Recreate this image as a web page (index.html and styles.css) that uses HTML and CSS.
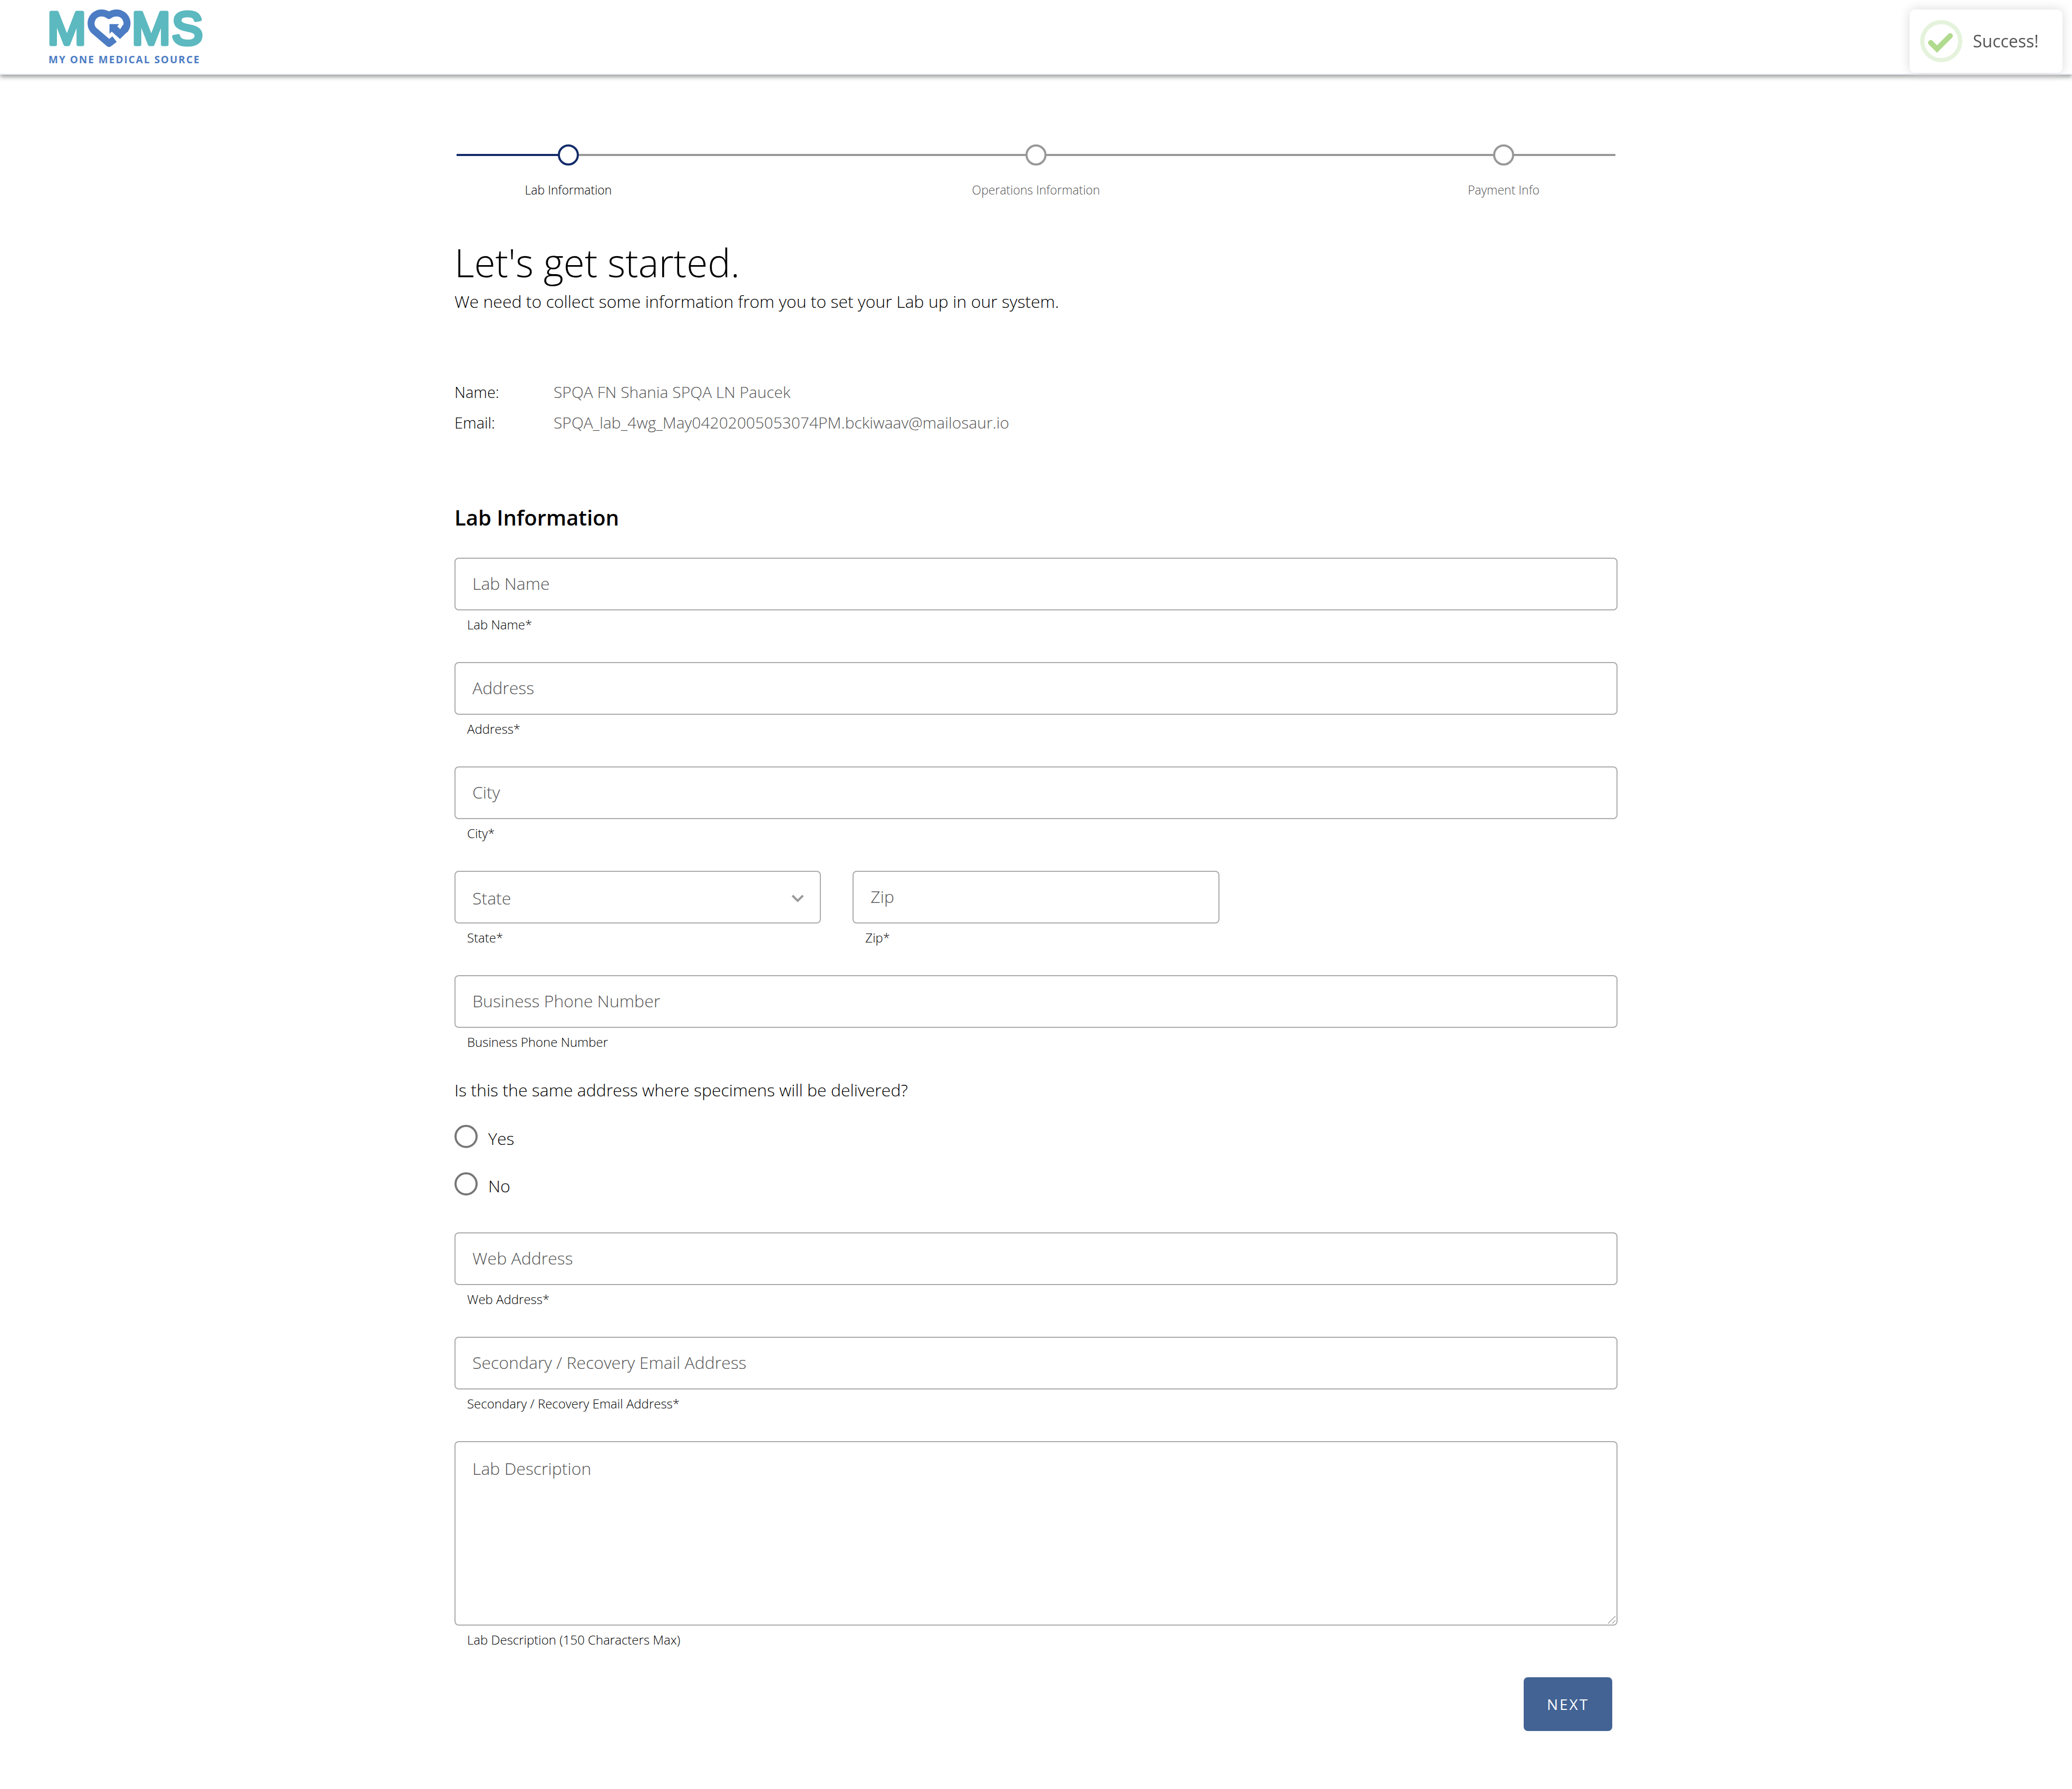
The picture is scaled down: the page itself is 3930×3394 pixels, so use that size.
FILE: index.html
```html
<!DOCTYPE html>
<html lang="en">
<head>
<meta charset="utf-8">
<title>MOMS - Lab Information</title>
<link rel="stylesheet" href="styles.css">
</head>
<body>
<header class="topbar">
  <svg class="logo" viewBox="90 0 300 140" role="img" aria-label="MOMS, My One Medical Source">
    <g class="logo-word">
      <text x="90" y="84">M</text>
      <text x="250" y="84">M</text>
      <text x="326" y="84">S</text>
    </g>
    <g transform="translate(60 0) scale(.3333)">
      <path class="logo-heart" d="M472 223 L441 247 L353 172 A59 59 0 0 1 397 74 Q421 74 440 88 Q460 74 484 74 A59 59 0 0 1 528 172"/>
      <path class="logo-arrow" d="M443 137 H498 L487 150 L504 166 L520 140 L546 180 L503 222 L456 180 L443 192 Z"/>
    </g>
    <text class="logo-tag" x="92" y="120">MY ONE MEDICAL SOURCE</text>
  </svg>
</header>

<div class="toast" role="status">
  <svg class="toast-icon" viewBox="0 0 80 80" aria-hidden="true">
    <circle class="toast-ring" cx="40" cy="40" r="36"/>
    <path class="toast-tick" d="M20 43 L32 55 L57 30"/>
  </svg>
  <span>Success!</span>
</div>

<main class="page">
  <ol class="stepper">
    <li class="step step-active"><span class="step-dot"></span>Lab Information</li>
    <li class="step"><span class="step-dot"></span>Operations Information</li>
    <li class="step"><span class="step-dot"></span>Payment Info</li>
  </ol>

  <h1 class="title">Let's get started.</h1>
  <p class="lead">We need to collect some information from you to set your Lab up in our system.</p>

  <dl class="account">
    <dt>Name:</dt><dd>SPQA FN Shania SPQA LN Paucek</dd>
    <dt>Email:</dt><dd>SPQA_lab_4wg_May04202005053074PM.bckiwaav@mailosaur.io</dd>
  </dl>

  <h2 class="section-title">Lab Information</h2>

  <form class="form">
    <div class="field">
      <input class="control" id="lab-name" type="text" placeholder="Lab Name">
      <label class="help" for="lab-name">Lab Name*</label>
    </div>
    <div class="field">
      <input class="control" id="address" type="text" placeholder="Address">
      <label class="help" for="address">Address*</label>
    </div>
    <div class="field">
      <input class="control" id="city" type="text" placeholder="City">
      <label class="help" for="city">City*</label>
    </div>
    <div class="field-row">
      <div class="field">
        <div class="select">
          <select class="control" id="state"><option>State</option></select>
          <svg class="chevron" viewBox="0 0 24 16" aria-hidden="true"><path d="M2 3 L12 13 L22 3"/></svg>
        </div>
        <label class="help" for="state">State*</label>
      </div>
      <div class="field">
        <input class="control" id="zip" type="text" placeholder="Zip">
        <label class="help" for="zip">Zip*</label>
      </div>
    </div>
    <div class="field">
      <input class="control" id="phone" type="tel" placeholder="Business Phone Number">
      <label class="help" for="phone">Business Phone Number</label>
    </div>
    <fieldset class="choices">
      <legend>Is this the same address where specimens will be delivered?</legend>
      <div class="choice"><input type="radio" name="same" id="same-yes"><label for="same-yes">Yes</label></div>
      <div class="choice"><input type="radio" name="same" id="same-no"><label for="same-no">No</label></div>
    </fieldset>
    <div class="field">
      <input class="control" id="web" type="text" placeholder="Web Address">
      <label class="help" for="web">Web Address*</label>
    </div>
    <div class="field">
      <input class="control" id="recovery" type="email" placeholder="Secondary / Recovery Email Address">
      <label class="help" for="recovery">Secondary / Recovery Email Address*</label>
    </div>
    <div class="field">
      <div class="area">
        <textarea class="control control-area" id="description" placeholder="Lab Description"></textarea>
        <svg class="grip" viewBox="0 0 16 16" aria-hidden="true"><path d="M1 15 L15 1 M9 15 L15 9"/></svg>
      </div>
      <label class="help" for="description">Lab Description (150 Characters Max)</label>
    </div>
    <button class="next" type="button">NEXT</button>
  </form>
</main>
</body>
</html>
```
FILE: styles.css
```css
* {
  box-sizing: border-box;
}

body {
  margin: 0;
  background: #fff;
  color: #000;
  font: 300 32px/40px "Open Sans", "Noto Sans", sans-serif;
}

/* Header */
.topbar {
  display: flex;
  padding-left: 90px;
  background: #fff;
  border-bottom: 2px solid #e1e5ee;
  box-shadow: 0 4px 8px rgba(0, 0, 0, .4);
}

.logo {
  width: 300px;
  height: 140px;
}

.logo-word {
  font: 400 88px "Liberation Sans", sans-serif;
  fill: #5bb9bf;
  stroke: #5bb9bf;
  stroke-width: 7px;
  stroke-linejoin: round;
}

.logo-heart {
  fill: none;
  stroke: #4c7cc3;
  stroke-width: 40px;
  stroke-linejoin: round;
}

.logo-arrow {
  fill: #4c7cc3;
}

.logo-tag {
  font: 700 19px "Open Sans", sans-serif;
  letter-spacing: 2px;
  fill: #4c7cc3;
}

/* Notification */
.toast {
  position: fixed;
  top: 18px;
  right: 18px;
  display: flex;
  align-items: center;
  gap: 20px;
  min-width: 290px;
  height: 120px;
  padding: 0 36px 0 20px;
  border-radius: 10px;
  background: #fff;
  box-shadow: 0 0 20px #d9d9d9;
  color: #545454;
  font-weight: 500;
}

.toast-icon {
  width: 80px;
  height: 80px;
  fill: none;
}

.toast-ring {
  stroke: #e5f3dc;
  stroke-width: 8px;
}

.toast-tick {
  stroke: #b0da8d;
  stroke-width: 10px;
  stroke-linecap: round;
}

/* Page column */
.page {
  max-width: 2206px;
  margin: 0 auto;
  padding: 132px 0 110px;
}

/* Stepper */
.stepper {
  display: flex;
  justify-content: space-between;
  margin: 0 4px;
  padding: 0;
  list-style: none;
  background: linear-gradient(#979897, #979897) 0 18px / 100% 4px no-repeat;
}

.step {
  display: flex;
  flex-direction: column;
  align-items: center;
  gap: 30px;
  width: 424px;
  color: #555;
  font-size: 23px;
  line-height: 32px;
}

.step-dot {
  width: 40px;
  height: 40px;
  border: 4px solid #979897;
  border-radius: 50%;
  background: #fff;
}

.step-active {
  color: #000;
  background: linear-gradient(#122b69, #122b69) 0 18px / 50% 4px no-repeat;
}

.step-active .step-dot {
  border-color: #122b69;
}

/* Introduction */
.title {
  margin: 74px 0 6px;
  font-size: 73px;
  font-weight: 300;
  line-height: 96px;
}

.lead {
  margin: 0;
}

.account {
  display: grid;
  grid-template-columns: 188px 1fr;
  row-gap: 18px;
  margin: 132px 0;
  font-size: 29px;
}

.account dd {
  margin: 0;
  color: #555;
  font-size: 30px;
}

.section-title {
  margin: 0 0 48px;
  font-size: 40px;
  font-weight: 600;
  line-height: 56px;
}

/* Form */
.form {
  display: flex;
  flex-direction: column;
  gap: 56px;
}

.field {
  display: flex;
  flex-direction: column;
  gap: 12px;
}

.field-row {
  display: grid;
  grid-template-columns: repeat(3, 1fr);
  gap: 60px;
}

.control {
  display: block;
  width: 100%;
  height: 100px;
  margin: 0;
  padding: 0 32px 4px;
  border: 2px solid #aaa;
  border-radius: 8px;
  background: #fff;
  color: #000;
  font: inherit;
}

.control::placeholder {
  color: #555;
  opacity: 1;
}

.control-area {
  height: 350px;
  padding: 30px 32px;
  resize: none;
}

.area {
  position: relative;
}

.grip {
  position: absolute;
  right: 3px;
  bottom: 3px;
  width: 16px;
  height: 16px;
  fill: none;
  stroke: #555;
  stroke-width: 1px;
}

.help {
  padding-left: 24px;
  font-size: 24px;
  line-height: 30px;
}

.select {
  position: relative;
}

.select .control {
  appearance: none;
  padding: 4px 32px 0;
  color: #555;
}

.chevron {
  position: absolute;
  top: 44px;
  right: 32px;
  width: 24px;
  height: 16px;
  fill: none;
  stroke: #999;
  stroke-width: 4px;
  pointer-events: none;
}

.choices {
  display: flex;
  flex-direction: column;
  gap: 46px;
  margin: 0 0 14px;
  padding: 0;
  border: 0;
}

.choices legend {
  margin-bottom: 46px;
  padding: 0;
}

.choice {
  display: flex;
  align-items: center;
  gap: 20px;
  height: 44px;
}

.choice input {
  appearance: none;
  width: 44px;
  height: 44px;
  margin: 0;
  border: 4px solid #777;
  border-radius: 50%;
}

.choice input:checked {
  background: radial-gradient(#122b69 10px, transparent 11px);
}

.choice label {
  padding-top: 8px;
}

.next {
  align-self: flex-end;
  width: 168px;
  height: 102px;
  margin-right: 10px;
  padding: 0;
  border: 0;
  border-radius: 8px;
  background: #426394;
  color: #fff;
  font: 400 28px/40px "Open Sans", "Noto Sans", sans-serif;
  letter-spacing: 3px;
}
```
